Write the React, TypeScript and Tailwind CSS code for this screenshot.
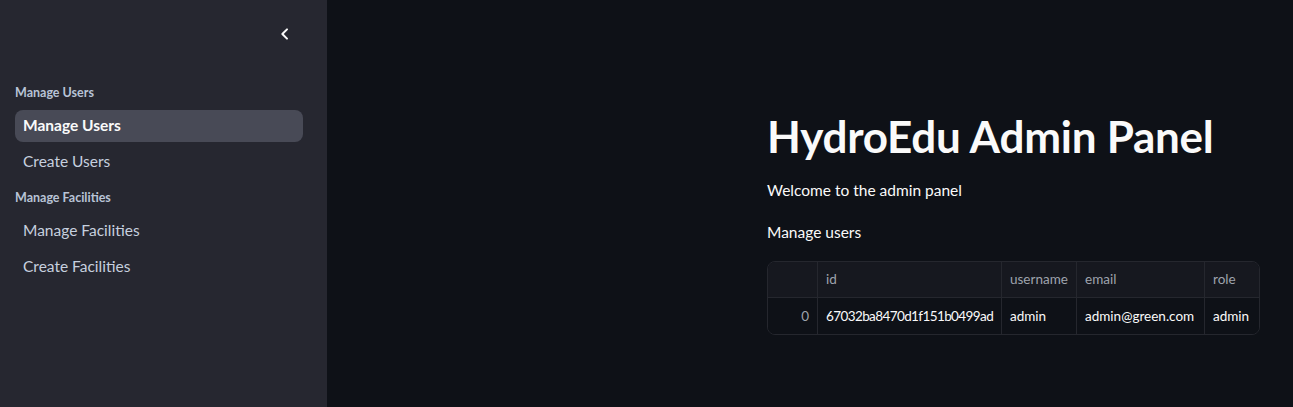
import React from "react";

const navGroups = [
  { title: "Manage Users", items: ["Manage Users", "Create Users"] },
  { title: "Manage Facilities", items: ["Manage Facilities", "Create Facilities"] },
];

const columns = [
  { key: "id", label: "id", width: "w-[184px]", cell: "tracking-[-0.6px]" },
  { key: "username", label: "username", width: "w-[75px]", cell: "" },
  { key: "email", label: "email", width: "w-[128px]", cell: "" },
  { key: "role", label: "role", width: "w-[54px]", cell: "" },
];

const rows = [
  { id: "67032ba8470d1f151b0499ad", username: "admin", email: "admin@green.com", role: "admin" },
];

const ChevronLeft = () => (
  <svg width="16" height="16" viewBox="0 0 24 24" fill="none" stroke="#fafafa" strokeWidth="3" strokeLinecap="round" strokeLinejoin="round">
    <path d="M15 5l-7 7 7 7" />
  </svg>
);

const App: React.FC = () => {
  return (
    <div className="flex h-[407px] w-[1293px] overflow-hidden bg-[#0e1117] font-['Lato','Noto_Sans',sans-serif] text-[#fafafa]">
      {/* Sidebar */}
      <aside className="flex w-[327px] shrink-0 flex-col bg-[#262730]">
        <div className="flex h-[68px] items-center justify-end pr-[34px]">
          <ChevronLeft />
        </div>
        <nav className="flex flex-col pl-[15px] pr-[24px] pt-[17px]">
          {navGroups.map((group, gi) => (
            <div key={group.title} className={gi > 0 ? "mt-[8px]" : ""}>
              <div className="mb-[9px] text-[12.5px] font-bold leading-[16px] text-[#b8c3d6]">
                {group.title}
              </div>
              {group.items.map((item, ii) => {
                const active = gi === 0 && ii === 0;
                return (
                  <div
                    key={item}
                    className={`mb-[4px] flex h-[32px] items-center rounded-[8px] px-[8px] text-[15.5px] ${
                      active ? "bg-[#484a56] font-bold text-[#fafafa]" : "text-[#c6d0df]"
                    }`}
                  >
                    {item}
                  </div>
                );
              })}
            </div>
          ))}
        </nav>
      </aside>

      {/* Main */}
      <main className="flex-1 pl-[440px] pt-[108px]">
        <h1 className="text-[44px] font-bold leading-[56px] tracking-[-0.25px]">HydroEdu Admin Panel</h1>
        <p className="mt-[14px] text-[15.5px] leading-[24px]">Welcome to the admin panel</p>
        <p className="mt-[18px] text-[15.5px] leading-[24px]">Manage users</p>

        <div className="mt-[17px] w-[493px] overflow-hidden rounded-[8px] border border-[#25272e] text-[13.5px]">
          <div className="flex h-[36px] border-b border-[#25272e] bg-[#16181f] text-[#9ea3ad]">
            <div className="w-[50px] border-r border-[#25272e]" />
            {columns.map((c, i) => (
              <div
                key={c.key}
                className={`${c.width} flex items-center px-[8px] ${i < columns.length - 1 ? "border-r border-[#25272e]" : ""}`}
              >
                {c.label}
              </div>
            ))}
          </div>
          {rows.map((r, ri) => (
            <div key={ri} className="flex h-[36px] bg-[#0e1117]">
              <div className="flex w-[50px] items-center justify-end border-r border-[#25272e] px-[8px] text-[#9ea3ad]">
                {ri}
              </div>
              {columns.map((c, i) => (
                <div
                  key={c.key}
                  className={`${c.width} ${c.cell} flex items-center overflow-hidden whitespace-nowrap px-[8px] ${
                    i < columns.length - 1 ? "border-r border-[#25272e]" : ""
                  }`}
                >
                  {r[c.key as keyof typeof r]}
                </div>
              ))}
            </div>
          ))}
        </div>
      </main>
    </div>
  );
};

export default App;
